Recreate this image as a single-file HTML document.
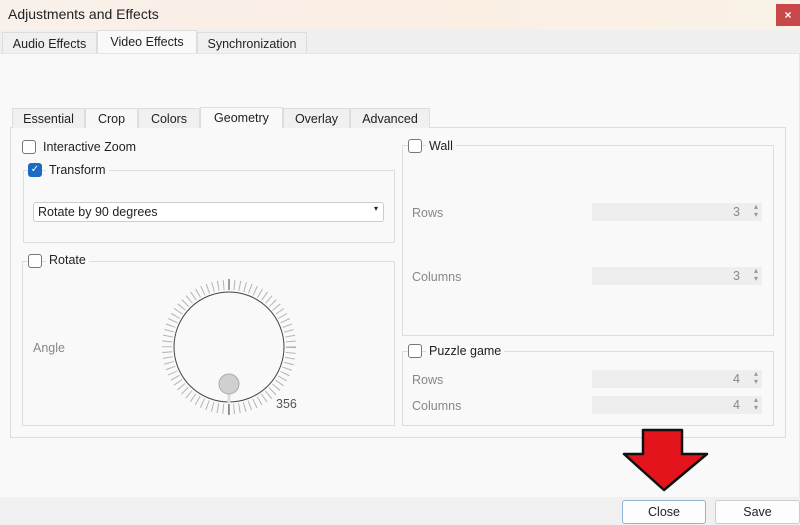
<!DOCTYPE html>
<html><head><meta charset="utf-8"><style>
*{box-sizing:border-box;margin:0;padding:0}
body{width:800px;height:525px;overflow:hidden;background:#f9f9f9;font-family:"Liberation Sans",sans-serif;font-size:12px;color:#222;position:relative}
.a{position:absolute}
.title{left:0;top:0;width:800px;height:30px;background:linear-gradient(90deg,#f8f0ea,#fbeee4 50%,#f9f2e6);font-size:14px;padding:6px 8px}
.x{left:776px;top:4px;width:24px;height:22px;background:#c9484a;color:#fff;font-size:12px;text-align:center;line-height:22px;font-weight:bold}
.tabbar{left:0;top:30px;width:800px;height:23px;background:#efefef}
.tab{position:absolute;height:22px;border:1px solid #ddd;border-bottom:none;background:#f0f0f0;font-size:12.5px;text-align:center;line-height:22px}
.sel{background:#f9f9f9;height:24px}
.gb{position:absolute;border:1px solid #ddd}
.cb{position:absolute;width:14px;height:14px;border:1px solid #777;border-radius:3px;background:#fff}
.lbl{position:absolute;font-size:12.5px;background:#f9f9f9;padding:0 3px}
.gray{color:#888;position:absolute;font-size:12.5px}
.spin{position:absolute;width:170px;height:18px;background:#eeeeee;color:#888;text-align:right;padding-right:22px;line-height:18px;font-size:12.5px}
.spin:after{content:"▴\A▾";white-space:pre;position:absolute;right:4px;top:0;font-size:8px;line-height:8px;color:#999}
.btn{position:absolute;height:24px;border:1px solid #ccc;background:#fdfdfd;text-align:center;line-height:22px;font-size:12.5px;border-radius:3px}
</style></head><body>
<div class="a title">Adjustments and Effects</div>
<div class="a x">×</div>
<div class="a tabbar"></div>
<div class="tab" style="left:2px;top:32px;width:95px">Audio Effects</div>
<div class="tab sel" style="left:97px;top:30px;width:100px">Video Effects</div>
<div class="tab" style="left:197px;top:32px;width:110px">Synchronization</div>
<div class="gb" style="left:0;top:53px;width:800px;height:445px;border-color:#e6e6e6;border-left:none"></div>
<div class="gb" style="left:10px;top:127px;width:776px;height:311px"></div>
<div class="tab" style="left:12px;top:108px;width:73px;height:20px;line-height:20px">Essential</div>
<div class="tab" style="left:85px;top:108px;width:53px;height:20px;line-height:20px;background:#f7f7f7">Crop</div>
<div class="tab" style="left:138px;top:108px;width:62px;height:20px;line-height:20px">Colors</div>
<div class="tab sel" style="left:200px;top:107px;width:83px;height:21px;line-height:20px">Geometry</div>
<div class="tab" style="left:283px;top:108px;width:67px;height:20px;line-height:20px">Overlay</div>
<div class="tab" style="left:350px;top:108px;width:80px;height:20px;line-height:20px">Advanced</div>

<div class="cb" style="left:22px;top:140px"></div><div class="lbl" style="left:40px;top:140px">Interactive Zoom</div>
<div class="gb" style="left:23px;top:170px;width:372px;height:73px"></div>
<div class="cb" style="left:28px;top:163px;background:#1a6bc4;border-color:#1a6bc4;color:#fff;font-size:10px;text-align:center;line-height:12px">✓</div>
<div class="lbl" style="left:46px;top:163px">Transform</div>
<div class="a" style="left:33px;top:202px;width:351px;height:20px;background:#fff;border:1px solid #ccc;border-radius:3px;font-size:12.5px;padding:2px 4px">Rotate by 90 degrees<span style="position:absolute;right:5px;top:1px;font-size:8px">▾</span></div>
<div class="gb" style="left:22px;top:261px;width:373px;height:165px"></div>
<div class="cb" style="left:28px;top:254px"></div><div class="lbl" style="left:46px;top:253px">Rotate</div>
<div class="gray" style="left:33px;top:341px">Angle</div>
<svg class="a" style="left:150px;top:268px" width="160" height="160">
<circle cx="79" cy="79" r="62" fill="none" stroke="#b4b4b4" stroke-width="10" stroke-dasharray="1 4.4"/>
<circle cx="79" cy="79" r="55" fill="#f9f9f9" stroke="#444" stroke-width="1"/>
<line x1="79" y1="11" x2="79" y2="22" stroke="#444"/><line x1="79" y1="136" x2="79" y2="147" stroke="#444"/>
<line x1="79" y1="125" x2="79" y2="135" stroke="#ddd" stroke-width="3"/>
<circle cx="79" cy="116" r="10" fill="#d0d0d0" stroke="#aaa"/>
</svg>
<div class="gray" style="left:276px;top:397px;color:#555">356</div>

<div class="gb" style="left:402px;top:145px;width:372px;height:191px"></div>
<div class="cb" style="left:408px;top:139px"></div><div class="lbl" style="left:426px;top:139px">Wall</div>
<div class="gray" style="left:412px;top:206px">Rows</div><div class="spin" style="left:592px;top:203px">3</div>
<div class="gray" style="left:412px;top:270px">Columns</div><div class="spin" style="left:592px;top:267px">3</div>
<div class="gb" style="left:402px;top:351px;width:372px;height:75px"></div>
<div class="cb" style="left:408px;top:344px"></div><div class="lbl" style="left:426px;top:344px">Puzzle game</div>
<div class="gray" style="left:412px;top:373px">Rows</div><div class="spin" style="left:592px;top:370px">4</div>
<div class="gray" style="left:412px;top:399px">Columns</div><div class="spin" style="left:592px;top:396px">4</div>

<div class="a" style="left:0;top:497px;width:800px;height:28px;background:#f0f0f0"></div>
<div class="btn" style="left:622px;top:500px;width:84px;border-color:#8fb4d4">Close</div>
<div class="btn" style="left:715px;top:500px;width:85px">Save</div>
<svg class="a" style="left:620px;top:428px" width="92" height="66"><polygon points="23,2 62,2 62,26 87,26 44,62 4,26 23,26" fill="#e3141c" stroke="#111" stroke-width="2.5" stroke-linejoin="round"/></svg>
</body></html>
